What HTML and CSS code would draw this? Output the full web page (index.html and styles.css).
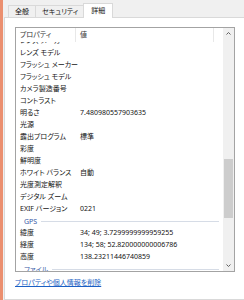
FILE: index.html
```html
<!DOCTYPE html>
<html lang="ja">
<head>
    <meta charset="UTF-8">
    <title>プロパティ</title>
    <link rel="stylesheet" href="styles.css">
</head>
<body>
    <div class="window">
        <div class="edge"></div>
        <div class="dialog">
            <div class="tabs">
                <div class="tab">全般</div>
                <div class="tab">セキュリティ</div>
                <div class="tab active">詳細</div>
            </div>
            <div class="panel">
                <div class="listbox">
                    <div class="list-main">
                        <div class="list-head">
                            <div class="head-col name-col">プロパティ</div>
                            <div class="head-col value-col">値</div>
                        </div>
                        <div class="list-body">
                            <div class="rows">
                                <div class="row"><span class="name">レンズ メーカー</span><span class="val"></span></div>
                                <div class="row"><span class="name">レンズ モデル</span><span class="val"></span></div>
                                <div class="row"><span class="name">フラッシュ メーカー</span><span class="val"></span></div>
                                <div class="row"><span class="name">フラッシュ モデル</span><span class="val"></span></div>
                                <div class="row"><span class="name">カメラ製造番号</span><span class="val"></span></div>
                                <div class="row"><span class="name">コントラスト</span><span class="val"></span></div>
                                <div class="row"><span class="name">明るさ</span><span class="val">7.480980557903635</span></div>
                                <div class="row"><span class="name">光源</span><span class="val"></span></div>
                                <div class="row"><span class="name">露出プログラム</span><span class="val">標準</span></div>
                                <div class="row"><span class="name">彩度</span><span class="val"></span></div>
                                <div class="row"><span class="name">鮮明度</span><span class="val"></span></div>
                                <div class="row"><span class="name">ホワイト バランス</span><span class="val">自動</span></div>
                                <div class="row"><span class="name">光度測定解釈</span><span class="val"></span></div>
                                <div class="row"><span class="name">デジタル ズーム</span><span class="val"></span></div>
                                <div class="row"><span class="name">EXIF バージョン</span><span class="val">0221</span></div>
                                <div class="group">GPS</div>
                                <div class="row"><span class="name">緯度</span><span class="val">34; 49; 3.7299999999959255</span></div>
                                <div class="row"><span class="name">経度</span><span class="val">134; 58; 52.820000000006786</span></div>
                                <div class="row"><span class="name">高度</span><span class="val">138.23211446740859</span></div>
                                <div class="group">ファイル</div>
                            </div>
                        </div>
                    </div>
                    <div class="scrollbar">
                        <div class="sb-btn">
                            <svg width="5" height="3" viewBox="0 0 5 3"><path d="M0.5 2.5 L2.5 0.5 L4.5 2.5" fill="none" stroke="#606060" stroke-width="1"/></svg>
                        </div>
                        <div class="sb-track"><div class="sb-thumb"></div></div>
                        <div class="sb-btn">
                            <svg width="5" height="3" viewBox="0 0 5 3"><path d="M0.5 0.5 L2.5 2.5 L4.5 0.5" fill="none" stroke="#606060" stroke-width="1"/></svg>
                        </div>
                    </div>
                </div>
                <a class="link" href="#">プロパティや個人情報を削除</a>
            </div>
        </div>
    </div>
</body>
</html>
```

FILE: styles.css
```css
body {
    margin: 0;
    background-color: #f0f0f0;
    font-family: "Noto Sans", "Noto Sans CJK JP", sans-serif;
    font-size: 7px;
    font-feature-settings: "palt";
    color: #141414;
}

.window {
    display: flex;
    height: 300px;
    overflow: hidden;
}

.edge {
    width: 3px;
    background-color: #eb8f6f;
}

.dialog {
    flex: 1;
    display: flex;
    flex-direction: column;
    padding: 3px 0 0 1px;
}

.tabs {
    display: flex;
    align-items: flex-end;
    height: 14px;
    padding-left: 4px;
}

.tab {
    height: 11px;
    line-height: 11px;
    padding: 0 6px;
    border: 1px solid #d9d9d9;
    border-bottom: 0;
    background-color: #f0f0f0;
    margin-right: -1px;
    white-space: nowrap;
}

.tab.active {
    position: relative;
    z-index: 1;
    height: 14px;
    line-height: 14px;
    padding: 0 7px;
    margin: 0 -2px -1px -1px;
    background-color: #fff;
}

.panel {
    flex: 1;
    background-color: #fff;
    border: 1px solid #d9d9d9;
    border-right: 0;
    padding: 9px 0 0 10px;
}

.listbox {
    display: flex;
    width: 220px;
    height: 245px;
    box-sizing: border-box;
    border: 1px solid #a3a3a3;
}

.list-main {
    flex: 1;
    display: flex;
    flex-direction: column;
    overflow: hidden;
}

.list-head {
    display: flex;
    height: 14px;
    line-height: 14px;
    flex-shrink: 0;
}

.head-col {
    box-sizing: border-box;
    padding-left: 4px;
    border-right: 1px solid #e8e8e8;
    color: #333;
}

.name-col {
    width: 60px;
}

.value-col {
    width: 138px;
}

.list-body {
    flex: 1;
    overflow: hidden;
}

.rows {
    margin-top: -7px;
}

.row {
    display: flex;
    height: 12px;
    line-height: 12px;
    white-space: nowrap;
}

.name {
    width: 60px;
    flex-shrink: 0;
    padding-left: 4px;
    box-sizing: border-box;
}

.val {
    padding-left: 4px;
}

.group {
    display: flex;
    align-items: center;
    height: 12px;
    padding-left: 8px;
    color: #3a5ca8;
}

.group::after {
    content: "";
    flex: 1;
    height: 1px;
    margin: 0 4px 0 4px;
    background-color: #d6dce6;
}

.scrollbar {
    width: 11px;
    display: flex;
    flex-direction: column;
    background-color: #f0f0f0;
}

.sb-btn {
    height: 11px;
    display: flex;
    align-items: center;
    justify-content: center;
}

.sb-track {
    flex: 1;
}

.sb-thumb {
    margin: 120px 1px 0 1px;
    height: 59px;
    background-color: #cdcdcd;
}

.link {
    display: inline-block;
    margin-top: 5px;
    line-height: 12px;
    color: #1a5fc4;
    text-decoration: underline;
}
```
